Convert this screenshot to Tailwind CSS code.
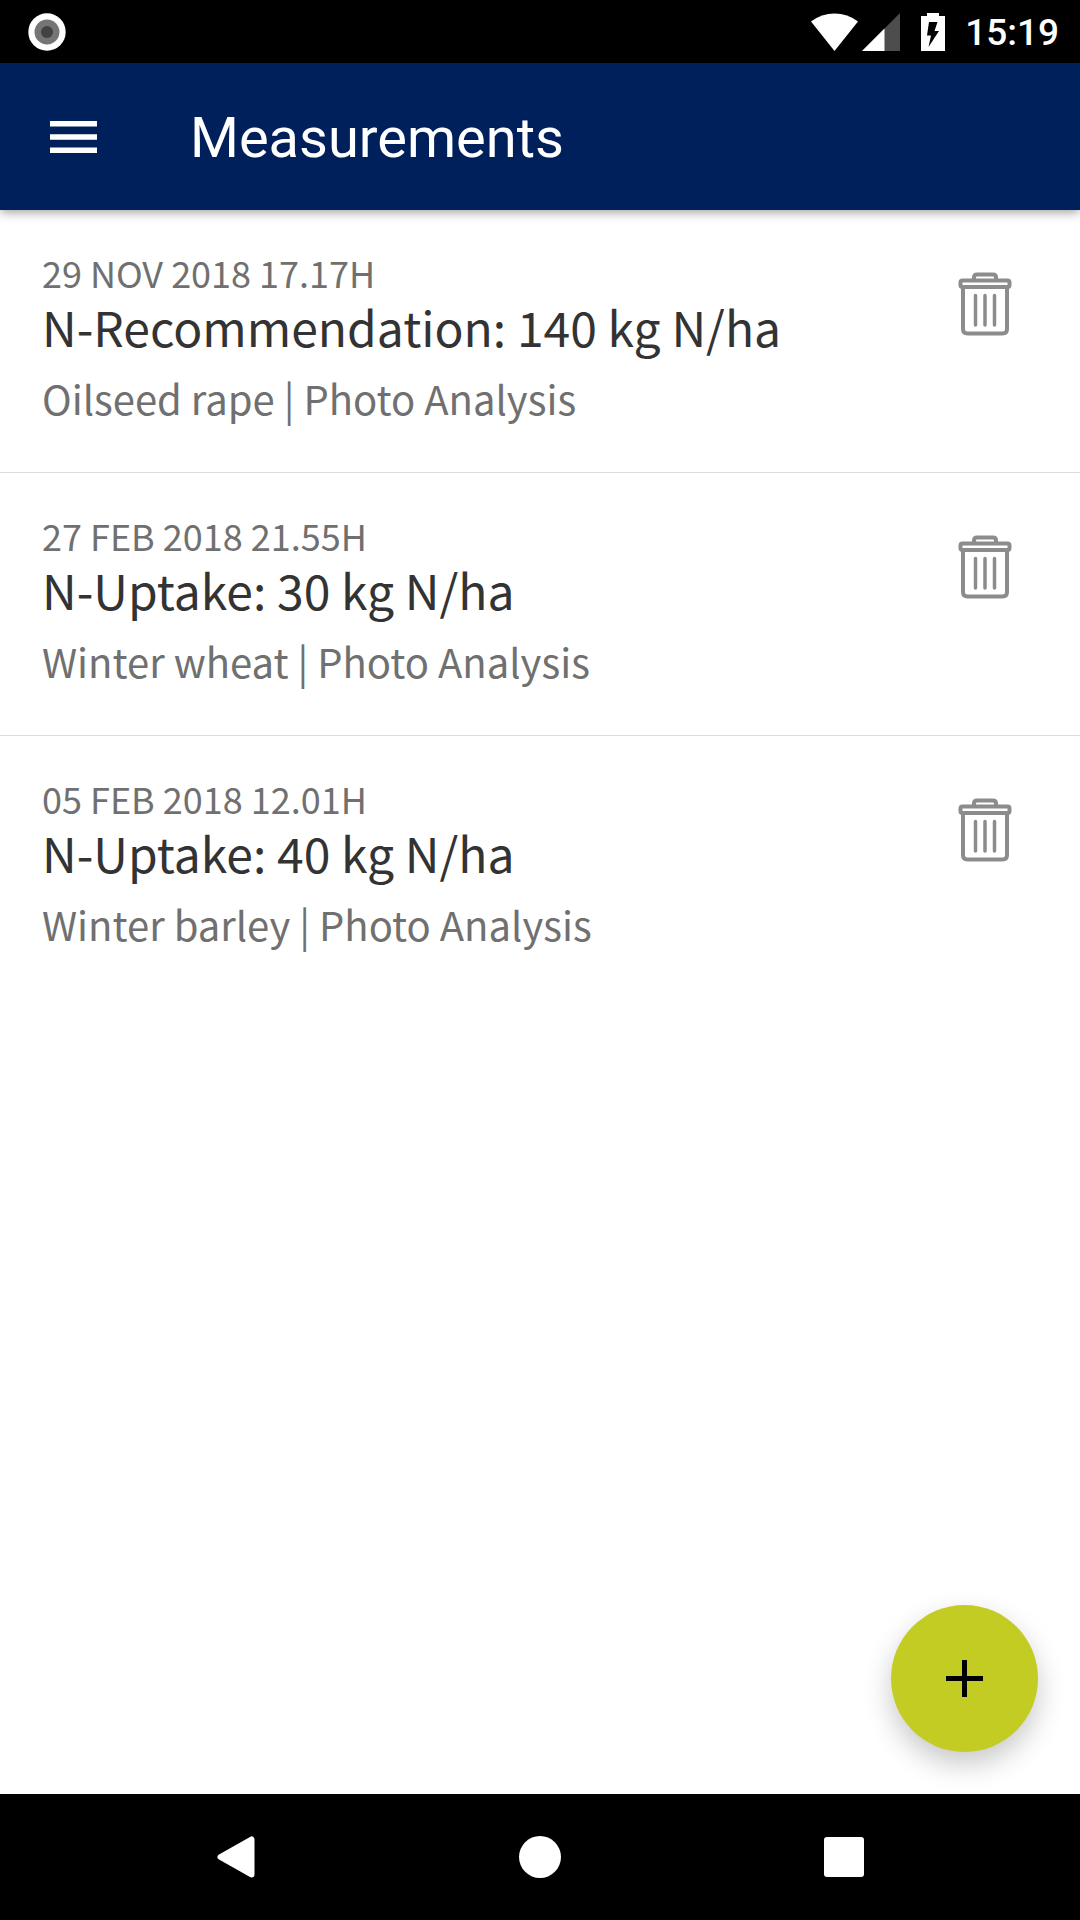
<!DOCTYPE html>
<html lang="en">
<head>
<meta charset="utf-8">
<meta name="viewport" content="width=device-width, initial-scale=1">
<title>Measurements</title>
<script src="https://cdn.jsdelivr.net/npm/@tailwindcss/browser@4"></script>
</head>
<body class="flex min-h-screen flex-col bg-white font-['Noto_Sans_CJK_SC',sans-serif]">

<svg class="hidden" aria-hidden="true">
  <symbol id="trash" viewBox="0 0 54 64">
    <g fill="none" stroke="#8c8c8c" stroke-width="4" stroke-linejoin="round" stroke-linecap="round">
      <path d="M16 8V5.500Q16 2.500 19 2.500H35Q38 2.500 38 5.500V8"/>
      <rect x="2.500" y="8.500" width="49" height="6.500" rx="2"/>
      <path d="M5 15.500V57Q5 61.500 9.500 61.500H44.500Q49 61.500 49 57V15.500"/>
      <path d="M17.500 23.500V53M27 23.500V53M36.500 23.500V53" stroke-width="3.500"/>
    </g>
  </symbol>
</svg>

<!-- Status bar -->
<div class="flex h-[63px] items-center justify-between bg-black pr-[21px] pl-7">
  <svg class="size-[38px]" viewBox="0 0 38 38" aria-hidden="true">
    <circle cx="19" cy="19" r="18.700" fill="#fff"/>
    <circle cx="19" cy="19" r="12.500" fill="#757575"/>
    <circle cx="19" cy="19" r="6" fill="#424242"/>
  </svg>
  <div class="flex items-center">
    <svg class="h-[38px] w-[47px]" viewBox="0 0 47 38" aria-hidden="true"><path d="M23.500 38 0 8.500Q10.500 .5 23.500 .5T47 8.500Z" fill="#fff"/></svg>
    <svg class="ml-1 size-[38px]" viewBox="0 0 38 38" aria-hidden="true"><path d="M38 0V38H0Z" fill="#4d4d4d"/><path d="M22.500 15.500V38H0Z" fill="#fff"/></svg>
    <svg class="ml-[21px] h-[38px] w-6" viewBox="0 0 24 38" aria-hidden="true"><path d="M6 0H18V3H24V38H0V3H6Z" fill="#fff"/><path d="M8 9H16.500L13.500 18H18L7.500 34L10 22.500H6Z" fill="#000"/></svg>
    <time class="ml-5 pt-0.5 font-[Roboto,sans-serif] text-[37px] leading-10 font-medium text-white">15:19</time>
  </div>
</div>

<!-- App bar -->
<header class="relative flex h-[147px] items-center bg-[#00205b] pl-[42px] shadow-[0_2px_10px_rgba(0,0,0,0.4)]">
  <button type="button" aria-label="Open menu" class="flex size-16 items-center">
    <svg class="ml-2 h-8 w-[47px]" viewBox="0 0 47 32" fill="#fff" aria-hidden="true"><path d="M0 0H47V5.500H0ZM0 13.200H47V18.700H0ZM0 26.500H47V32H0Z"/></svg>
  </button>
  <h1 class="ml-[84px] pt-0.5 font-[Roboto,sans-serif] text-[56px] leading-16 text-white">Measurements</h1>
</header>

<main class="relative flex-1">
  <ul>
    <li class="flex items-start justify-between border-b border-[#dcdcdc] pt-[38px] pr-[68px] pb-[46px] pl-[42px]">
      <div>
        <p class="text-[36px] leading-12 text-[#707070]">29 NOV 2018 17.17H</p>
        <h2 class="text-[48px] leading-[60px] text-[#333]">N-Recommendation: 140 kg N/ha</h2>
        <p class="mt-[14px] text-[40px] leading-14 text-[#707070]">Oilseed rape | Photo Analysis</p>
      </div>
      <button type="button" aria-label="Delete measurement" class="mt-6"><svg class="h-16 w-[54px]"><use href="#trash"/></svg></button>
    </li>
    <li class="flex items-start justify-between border-b border-[#dcdcdc] pt-[38px] pr-[68px] pb-[46px] pl-[42px]">
      <div>
        <p class="text-[36px] leading-12 text-[#707070]">27 FEB 2018 21.55H</p>
        <h2 class="text-[48px] leading-[60px] text-[#333]">N-Uptake: 30 kg N/ha</h2>
        <p class="mt-[14px] text-[40px] leading-14 text-[#707070]">Winter wheat | Photo Analysis</p>
      </div>
      <button type="button" aria-label="Delete measurement" class="mt-6"><svg class="h-16 w-[54px]"><use href="#trash"/></svg></button>
    </li>
    <li class="flex items-start justify-between pt-[38px] pr-[68px] pb-[46px] pl-[42px]">
      <div>
        <p class="text-[36px] leading-12 text-[#707070]">05 FEB 2018 12.01H</p>
        <h2 class="text-[48px] leading-[60px] text-[#333]">N-Uptake: 40 kg N/ha</h2>
        <p class="mt-[14px] text-[40px] leading-14 text-[#707070]">Winter barley | Photo Analysis</p>
      </div>
      <button type="button" aria-label="Delete measurement" class="mt-6"><svg class="h-16 w-[54px]"><use href="#trash"/></svg></button>
    </li>
  </ul>
  <button type="button" aria-label="Add measurement" class="absolute right-[42px] bottom-[42px] flex size-[147px] items-center justify-center rounded-full bg-[#c3cc23] shadow-[0_12px_28px_rgba(0,0,0,0.22)]">
    <svg class="size-[37px]" viewBox="0 0 37 37" aria-hidden="true"><path d="M16 0H21V16H37V21H21V37H16V21H0V16H16Z"/></svg>
  </button>
</main>

<!-- System navigation -->
<nav class="flex h-[126px] bg-black px-[84px]" aria-label="System">
  <button type="button" aria-label="Back" class="flex flex-1 items-center justify-center">
    <svg class="h-[42px] w-[38px]" viewBox="0 0 38 42" aria-hidden="true"><path d="M3.500 21 34.500 3.500V38.500Z" fill="#fff" stroke="#fff" stroke-width="6" stroke-linejoin="round"/></svg>
  </button>
  <button type="button" aria-label="Home" class="flex flex-1 items-center justify-center"><span class="size-[42px] rounded-full bg-white"></span></button>
  <button type="button" aria-label="Recent apps" class="flex flex-1 items-center justify-center"><span class="size-10 rounded-[3px] bg-white"></span></button>
</nav>
</body>
</html>
